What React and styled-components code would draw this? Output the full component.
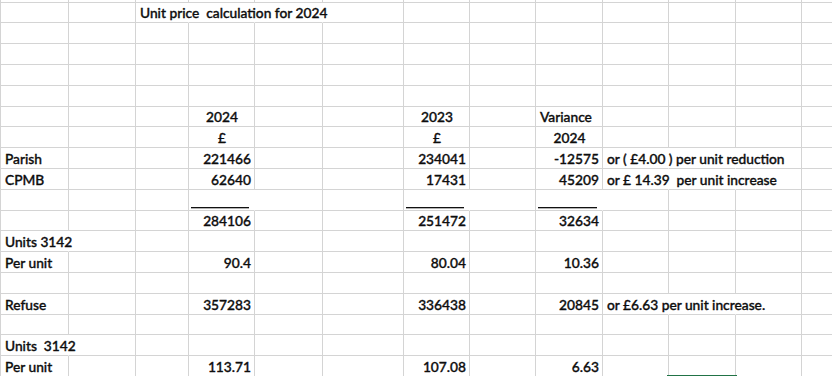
import React from "react";
import styled, { createGlobalStyle } from "styled-components";

const Global = createGlobalStyle`
  html, body { margin: 0; padding: 0; background: #fff; overflow: hidden; }
  body { font-family: Lato, "Open Sans", "Liberation Sans", sans-serif; }
`;

const COLS = [68, 67, 53, 66, 68, 81, 66, 66, 67, 66, 67, 66, 66];
const GRID = "#d4d4d4";

const Sheet = styled.div`
  display: flex;
  flex-direction: column;
  width: 832px;
  height: 376px;
  overflow: hidden;
  border-left: 1px solid ${GRID};
  box-sizing: border-box;
`;

const Row = styled.div`
  display: flex;
  flex: none;
  height: ${(p) => p.$h}px;
`;

const Cell = styled.div`
  position: relative;
  flex: none;
  box-sizing: border-box;
  width: ${(p) => p.$w}px;
  height: 100%;
  border-bottom: 1px solid ${GRID};
  border-right: 1px solid ${(p) => (p.$open ? "transparent" : GRID)};
  display: flex;
  align-items: flex-end;
  justify-content: ${(p) =>
    p.$align === "right" ? "flex-end" : p.$align === "center" ? "center" : "flex-start"};
  padding: 0 3px 1px 4px;
  overflow: visible;
  z-index: ${(p) => (p.$text ? 1 : 0)};
`;

const Text = styled.span`
  font-family: Lato, "Open Sans", "Liberation Sans", sans-serif;
  font-size: 13.75px;
  font-weight: 500;
  line-height: 16px;
  color: #0d0d0d;
  white-space: pre;
  -webkit-text-stroke: 0.35px #0d0d0d;
`;

const Rule = styled.div`
  align-self: flex-end;
  width: 100%;
  height: 1px;
  margin: 0 -1px 1px -2px;
  background: #111;
  box-shadow: 0 1px 0 rgba(0, 0, 0, 0.3);
`;

const Selection = styled.div`
  position: absolute;
  left: -2px;
  right: -2px;
  bottom: -1px;
  height: 2px;
  background: #217346;
`;

const L = (t) => ({ t, a: "left" });
const R = (t) => ({ t, a: "right" });
const C = (t) => ({ t, a: "center" });

const ROWS = [
  { h: 3 },
  { h: 20, cells: { 2: L("Unit price  calculation for 2024") }, open: [2, 3, 4] },
  { h: 21 },
  { h: 21 },
  { h: 21 },
  { h: 21 },
  { h: 20, cells: { 3: C("2024"), 6: C("2023"), 8: L("Variance") } },
  { h: 21, cells: { 3: C("£"), 6: C("£"), 8: C("2024") } },
  {
    h: 21,
    cells: {
      0: L("Parish"),
      3: R("221466"),
      6: R("234041"),
      8: R("-12575"),
      9: L("or ( £4.00 ) per unit reduction"),
    },
    open: [9, 10],
  },
  {
    h: 21,
    cells: {
      0: L("CPMB"),
      3: R("62640"),
      6: R("17431"),
      8: R("45209"),
      9: L("or £ 14.39  per unit increase"),
    },
    open: [9, 10],
  },
  { h: 21, rules: [3, 6, 8], open: [3, 6, 8] },
  { h: 20, cells: { 3: R("284106"), 6: R("251472"), 8: R("32634") } },
  { h: 21, cells: { 0: L("Units 3142") }, open: [0] },
  { h: 21, cells: { 0: L("Per unit"), 3: R("90.4"), 6: R("80.04"), 8: R("10.36") } },
  { h: 21 },
  {
    h: 21,
    cells: {
      0: L("Refuse"),
      3: R("357283"),
      6: R("336438"),
      8: R("20845"),
      9: L("or £6.63 per unit increase."),
    },
    open: [9, 10],
  },
  { h: 20 },
  { h: 21, cells: { 0: L("Units  3142") }, open: [0] },
  {
    h: 21,
    cells: { 0: L("Per unit"), 3: R("113.71"), 6: R("107.08"), 8: R("6.63") },
    selected: 10,
  },
  { h: 21 },
];

export default function App() {
  return (
    <>
      <Global />
      <Sheet>
        {ROWS.map((row, ri) => (
          <Row key={ri} $h={row.h}>
            {COLS.map((w, ci) => {
              const cell = row.cells && row.cells[ci];
              const open = row.open && row.open.includes(ci);
              const rule = row.rules && row.rules.includes(ci);
              return (
                <Cell key={ci} $w={w} $open={open} $align={cell ? cell.a : "left"} $text={!!cell}>
                  {cell && <Text>{cell.t}</Text>}
                  {rule && <Rule />}
                  {row.selected === ci && <Selection />}
                </Cell>
              );
            })}
          </Row>
        ))}
      </Sheet>
    </>
  );
}
